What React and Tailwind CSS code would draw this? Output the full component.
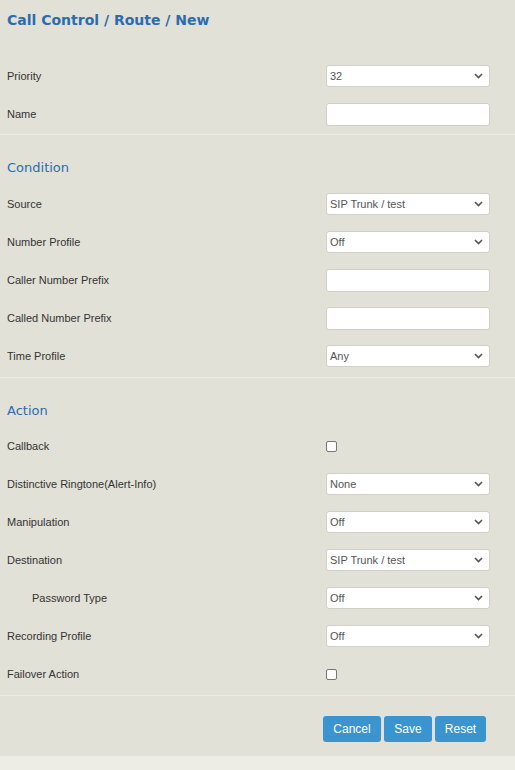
const Chevron = () => (
  <svg width="9" height="6" viewBox="0 0 9 6" className="shrink-0">
    <path d="M1 1l3.5 3.5L8 1" fill="none" stroke="#555" strokeWidth="1.6" />
  </svg>
);

const SelectBox = ({ value }) => (
  <div className="w-[164px] h-[22px] bg-white border border-[#d0d0c8] rounded-[3px] flex items-center justify-between pl-[3px] pr-[6px] text-[11px] text-[#555]">
    <span>{value}</span>
    <Chevron />
  </div>
);

const TextBox = () => (
  <div className="w-[164px] h-[23px] bg-white border border-[#cfcfc7] rounded-[3px]" />
);

const CheckBox = () => (
  <div className="w-[11px] h-[11px] bg-white border border-[#777] rounded-[2px]" />
);

const Row = ({ label, indent, children }) => (
  <div className="h-[38px] flex items-center justify-between pr-[25px]">
    <span className={`text-[11px] text-[#333] ${indent ? "pl-[32px]" : "pl-[7px]"}`}>
      {label}
    </span>
    <div className="w-[164px] flex items-center">{children}</div>
  </div>
);

const Heading = ({ children, bottom = "pb-[9px]" }) => (
  <div className={`pt-[25px] ${bottom} pl-[7px] leading-[16px] text-[13px] text-[#2b6cb0] font-['DejaVu_Sans',sans-serif]`}>
    {children}
  </div>
);

const Divider = () => <div className="h-px bg-[#ebebe4]" />;

export default function App() {
  return (
    <div className="w-[515px] h-[770px] bg-[#e2e1d7] font-['Liberation_Sans',Arial,sans-serif] flex flex-col">
      <div className="h-[40px] flex items-center pl-[7px] pt-[1px]">
        <h1 className="text-[14px] font-bold text-[#2b6cb0] font-['DejaVu_Sans',sans-serif]">
          Call Control / Route / New
        </h1>
      </div>

      <div className="pt-[17px] pb-[1px]">
        <Row label="Priority">
          <SelectBox value="32" />
        </Row>
        <Row label="Name">
          <TextBox />
        </Row>
      </div>
      <Divider />

      <Heading>Condition</Heading>
      <Row label="Source">
        <SelectBox value="SIP Trunk / test" />
      </Row>
      <Row label="Number Profile">
        <SelectBox value="Off" />
      </Row>
      <Row label="Caller Number Prefix">
        <TextBox />
      </Row>
      <Row label="Called Number Prefix">
        <TextBox />
      </Row>
      <Row label="Time Profile">
        <SelectBox value="Any" />
      </Row>
      <div className="h-[2px]" />
      <Divider />

      <Heading bottom="pb-[8px]">Action</Heading>
      <Row label="Callback">
        <CheckBox />
      </Row>
      <Row label="Distinctive Ringtone(Alert-Info)">
        <SelectBox value="None" />
      </Row>
      <Row label="Manipulation">
        <SelectBox value="Off" />
      </Row>
      <Row label="Destination">
        <SelectBox value="SIP Trunk / test" />
      </Row>
      <Row label="Password Type" indent>
        <SelectBox value="Off" />
      </Row>
      <Row label="Recording Profile">
        <SelectBox value="Off" />
      </Row>
      <Row label="Failover Action">
        <CheckBox />
      </Row>
      <div className="h-[2px]" />
      <Divider />

      <div className="flex-1 flex items-start justify-end pt-[20px] pr-[29px] gap-[3px]">
        <button className="h-[26px] w-[58px] rounded-[3px] bg-[#3a94d0] text-white text-[12px]">Cancel</button>
        <button className="h-[26px] w-[48px] rounded-[3px] bg-[#3a94d0] text-white text-[12px]">Save</button>
        <button className="h-[26px] w-[51px] rounded-[3px] bg-[#3a94d0] text-white text-[12px]">Reset</button>
      </div>
      <div className="h-[14px] bg-[#ededE5]" />
    </div>
  );
}
